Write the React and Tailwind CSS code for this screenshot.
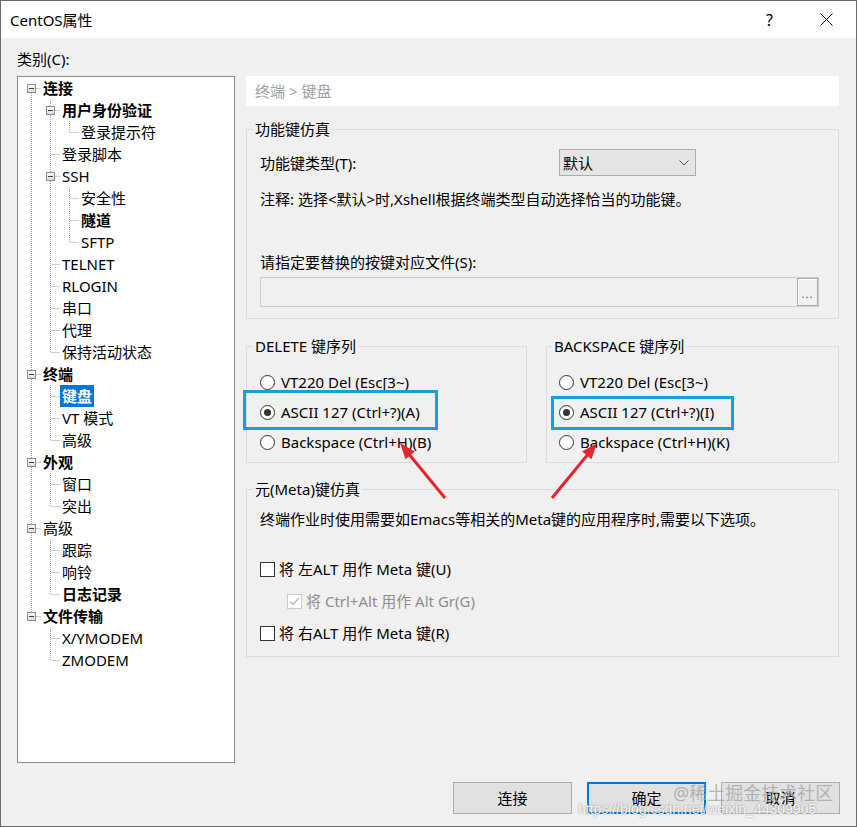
import React from "react";

const tree = [
  { t: "连接", l: 0, b: true, open: true },
  { t: "用户身份验证", l: 1, b: true, open: true },
  { t: "登录提示符", l: 2 },
  { t: "登录脚本", l: 1 },
  { t: "SSH", l: 1, open: true },
  { t: "安全性", l: 2 },
  { t: "隧道", l: 2, b: true },
  { t: "SFTP", l: 2 },
  { t: "TELNET", l: 1 },
  { t: "RLOGIN", l: 1 },
  { t: "串口", l: 1 },
  { t: "代理", l: 1 },
  { t: "保持活动状态", l: 1 },
  { t: "终端", l: 0, b: true, open: true },
  { t: "键盘", l: 1, b: true, sel: true },
  { t: "VT 模式", l: 1 },
  { t: "高级", l: 1 },
  { t: "外观", l: 0, b: true, open: true },
  { t: "窗口", l: 1 },
  { t: "突出", l: 1 },
  { t: "高级", l: 0, open: true },
  { t: "跟踪", l: 1 },
  { t: "响铃", l: 1 },
  { t: "日志记录", l: 1, b: true },
  { t: "文件传输", l: 0, b: true, open: true },
  { t: "X/YMODEM", l: 1 },
  { t: "ZMODEM", l: 1 },
];

// does the branch at level j keep going below row i?
function continues(i, j) {
  for (let k = i + 1; k < tree.length; k++) {
    if (tree[k].l <= j) return tree[k].l === j;
  }
  return false;
}

function TreeRow({ item, i }) {
  const w = 19 * (item.l + 1);
  const own = 19 * item.l + 9.5;
  const dot = { stroke: "#a0a0a0", strokeWidth: 1, strokeDasharray: "1 1" };
  return (
    <div className="flex h-[22px] items-center">
      <svg width={w} height="22" className="shrink-0">
        {Array.from({ length: item.l }).map((_, j) =>
          continues(i, j) ? <line key={j} x1={19 * j + 9.5} y1="0" x2={19 * j + 9.5} y2="22" {...dot} /> : null
        )}
        {i > 0 && <line x1={own} y1="0" x2={own} y2="11" {...dot} />}
        {continues(i, item.l) && <line x1={own} y1="12" x2={own} y2="22" {...dot} />}
        <line x1={own + 1} y1="11.5" x2={w} y2="11.5" {...dot} />
        {item.open && (
          <g>
            <defs>
              <linearGradient id={`g${i}`} x1="0" y1="0" x2="0" y2="1">
                <stop offset="0" stopColor="#ffffff" />
                <stop offset="1" stopColor="#d8d8d8" />
              </linearGradient>
            </defs>
            <rect x={19 * item.l + 5.5} y="7.5" width="8" height="8" fill={`url(#g${i})`} stroke="#8f8f8f" />
            <line x1={19 * item.l + 7} y1="11.5" x2={19 * item.l + 12} y2="11.5" stroke="#3c3c3c" />
          </g>
        )}
      </svg>
      <span
        className={`px-[2px] leading-[22px] h-[22px] whitespace-nowrap ${item.b ? "font-bold" : ""} ${
          item.sel ? "bg-[#0078d7] text-white" : ""
        }`}
      >
        {item.t}
      </span>
    </div>
  );
}

function Radio({ checked, label }) {
  return (
    <div className="flex h-[30px] items-center">
      <span className="flex h-[15px] w-[15px] shrink-0 items-center justify-center rounded-full border border-[#333333] bg-white">
        {checked && <span className="h-[7px] w-[7px] rounded-full bg-[#333333]" />}
      </span>
      <span className="ml-[6px] whitespace-nowrap leading-[22px]">{label}</span>
    </div>
  );
}

function Check({ label, disabled, checked, indent }) {
  return (
    <div className={`flex h-[32px] items-center ${indent ? "pl-[27px]" : ""}`}>
      <span
        className={`flex h-[15px] w-[15px] shrink-0 items-center justify-center border bg-white ${
          disabled ? "border-[#cccccc]" : "border-[#333333]"
        }`}
      >
        {checked && (
          <svg width="11" height="9" viewBox="0 0 11 9">
            <path d="M1 4.5 L4 7.5 L10 1" fill="none" stroke={disabled ? "#b4b4b4" : "#333"} strokeWidth="1.2" />
          </svg>
        )}
      </span>
      <span className={`ml-[4px] whitespace-nowrap leading-[22px] ${disabled ? "text-[#8d8d8d]" : ""}`}>{label}</span>
    </div>
  );
}

function Button({ children, primary }) {
  return (
    <div
      className={`flex h-[32px] w-[119px] items-center justify-center bg-[#e1e1e1] ${
        primary ? "border-2 border-[#0078d7]" : "border border-[#adadad]"
      }`}
    >
      {children}
    </div>
  );
}

export default function App() {
  return (
    <div className="relative h-[827px] w-[857px] overflow-hidden border border-[#6b6b6b] bg-[#f0f0f0] font-['Noto_Sans','Noto_Sans_CJK_SC',sans-serif] text-[15px] text-black">
      {/* title bar */}
      <div className="flex h-[37px] items-center bg-white pl-[9px] pr-[23px]">
        <span className="leading-[22px]">CentOS属性</span>
        <span className="ml-auto mr-[47px] text-[16px] leading-[22px]">?</span>
        <svg width="13" height="13" viewBox="0 0 13 13">
          <path d="M0.5 0.5 L12.5 12.5 M12.5 0.5 L0.5 12.5" stroke="#000" strokeWidth="1" />
        </svg>
      </div>

      <div className="px-[16px]">
        <div className="h-[38px] pt-[10px] leading-[22px]">类别(C):</div>

        <div className="flex gap-[11px]">
          {/* category tree */}
          <div className="h-[687px] w-[218px] shrink-0 border border-[#8c8c8c] bg-white pl-[4px]">
            {tree.map((item, i) => (
              <TreeRow key={i} item={item} i={i} />
            ))}
          </div>

          {/* settings page */}
          <div className="w-[593px] shrink-0">
            <div className="flex h-[30px] items-center bg-white pl-[9px] text-[#a0a0a0]">终端 &gt; 键盘</div>

            <fieldset className="mt-[12px] border border-[#dcdcdc] px-[13px] pb-[11px]">
              <legend className="-ml-[7px] px-[2px] leading-[22px]">功能键仿真</legend>
              <div className="mt-[9px] flex h-[27px] items-center">
                <span className="w-[299px] shrink-0 leading-[22px]">功能键类型(T):</span>
                <div className="flex h-[27px] w-[137px] items-center border border-[#adadad] bg-[#e5e5e5] pl-[3px] pr-[6px]">
                  <span className="leading-[22px]">默认</span>
                  <svg className="ml-auto" width="10" height="6" viewBox="0 0 10 6">
                    <path d="M0.5 0.5 L5 5 L9.5 0.5" fill="none" stroke="#555" strokeWidth="1" />
                  </svg>
                </div>
              </div>
              <div className="mt-[12px] leading-[22px]">注释: 选择&lt;默认&gt;时,Xshell根据终端类型自动选择恰当的功能键。</div>
              <div className="mt-[41px] leading-[22px]">请指定要替换的按键对应文件(S):</div>
              <div className="mt-[4px] flex h-[30px] w-[559px] border border-[#cccccc] bg-[#f0f0f0]">
                <div className="ml-auto flex w-[21px] items-end justify-center border border-[#adadad] bg-[#f0f0f0] pb-[6px] shadow-[inset_1px_1px_0_#ffffff]">
                  <span className="text-[11px] leading-[10px] tracking-[1px] text-[#555]">...</span>
                </div>
              </div>
            </fieldset>

            <div className="mt-[16px] flex gap-[19px]">
              <fieldset className="w-[281px] border border-[#dcdcdc] pl-[13px] pb-[5px]">
                <legend className="-ml-[7px] px-[2px] leading-[22px]">DELETE 键序列</legend>
                <div className="mt-[10px]">
                  <Radio label="VT220 Del (Esc[3~)" />
                  <Radio checked label="ASCII 127 (Ctrl+?)(A)" />
                  <Radio label="Backspace (Ctrl+H)(B)" />
                </div>
              </fieldset>
              <fieldset className="w-[293px] border border-[#dcdcdc] pl-[12px] pb-[5px]">
                <legend className="-ml-[7px] px-[2px] leading-[22px]">BACKSPACE 键序列</legend>
                <div className="mt-[10px]">
                  <Radio label="VT220 Del (Esc[3~)" />
                  <Radio checked label="ASCII 127 (Ctrl+?)(I)" />
                  <Radio label="Backspace (Ctrl+H)(K)" />
                </div>
              </fieldset>
            </div>

            <fieldset className="mt-[15px] border border-[#dcdcdc] px-[13px] pb-[7px]">
              <legend className="-ml-[7px] px-[2px] leading-[22px]">元(Meta)键仿真</legend>
              <div className="mt-[8px] leading-[22px]">终端作业时使用需要如Emacs等相关的Meta键的应用程序时,需要以下选项。</div>
              <div className="mt-[23px]">
                <Check label="将 左ALT 用作 Meta 键(U)" />
                <Check indent disabled checked label="将 Ctrl+Alt 用作 Alt Gr(G)" />
                <Check label="将 右ALT 用作 Meta 键(R)" />
              </div>
            </fieldset>
          </div>
        </div>

        <div className="mt-[19px] flex justify-end gap-[15px]">
          <Button>连接</Button>
          <Button primary>确定</Button>
          <Button>取消</Button>
        </div>
      </div>

      {/* annotation overlays */}
      <div className="pointer-events-none absolute left-[242px] top-[389px] h-[40px] w-[195px] border-[3px] border-[#159ee0]" />
      <div className="pointer-events-none absolute left-[550px] top-[395px] h-[34px] w-[183px] border-[3px] border-[#159ee0]" />
      <svg className="pointer-events-none absolute left-0 top-0" width="857" height="827">
        <line x1="444" y1="497" x2="407" y2="452" stroke="#e3262c" strokeWidth="3" />
        <polygon points="399,442 413.8,450.6 404.5,458.2" fill="#e3262c" />
        <line x1="551" y1="497" x2="588" y2="452" stroke="#e3262c" strokeWidth="3" />
        <polygon points="596,442 590.5,458.2 581.2,450.6" fill="#e3262c" />
      </svg>
      <div className="pointer-events-none absolute left-[672px] top-[781px] whitespace-nowrap text-[18px] leading-[22px] text-[#a6a6a6]/80">
        @稀土掘金技术社区
      </div>
      <div className="pointer-events-none absolute left-[577px] top-[799px] whitespace-nowrap font-['Liberation_Sans',sans-serif] text-[14px] leading-[18px] text-white/90 [text-shadow:0_0_2px_rgba(0,0,0,0.45)]">
        https://blog.csdn.net/weixin_44309905
      </div>
    </div>
  );
}
